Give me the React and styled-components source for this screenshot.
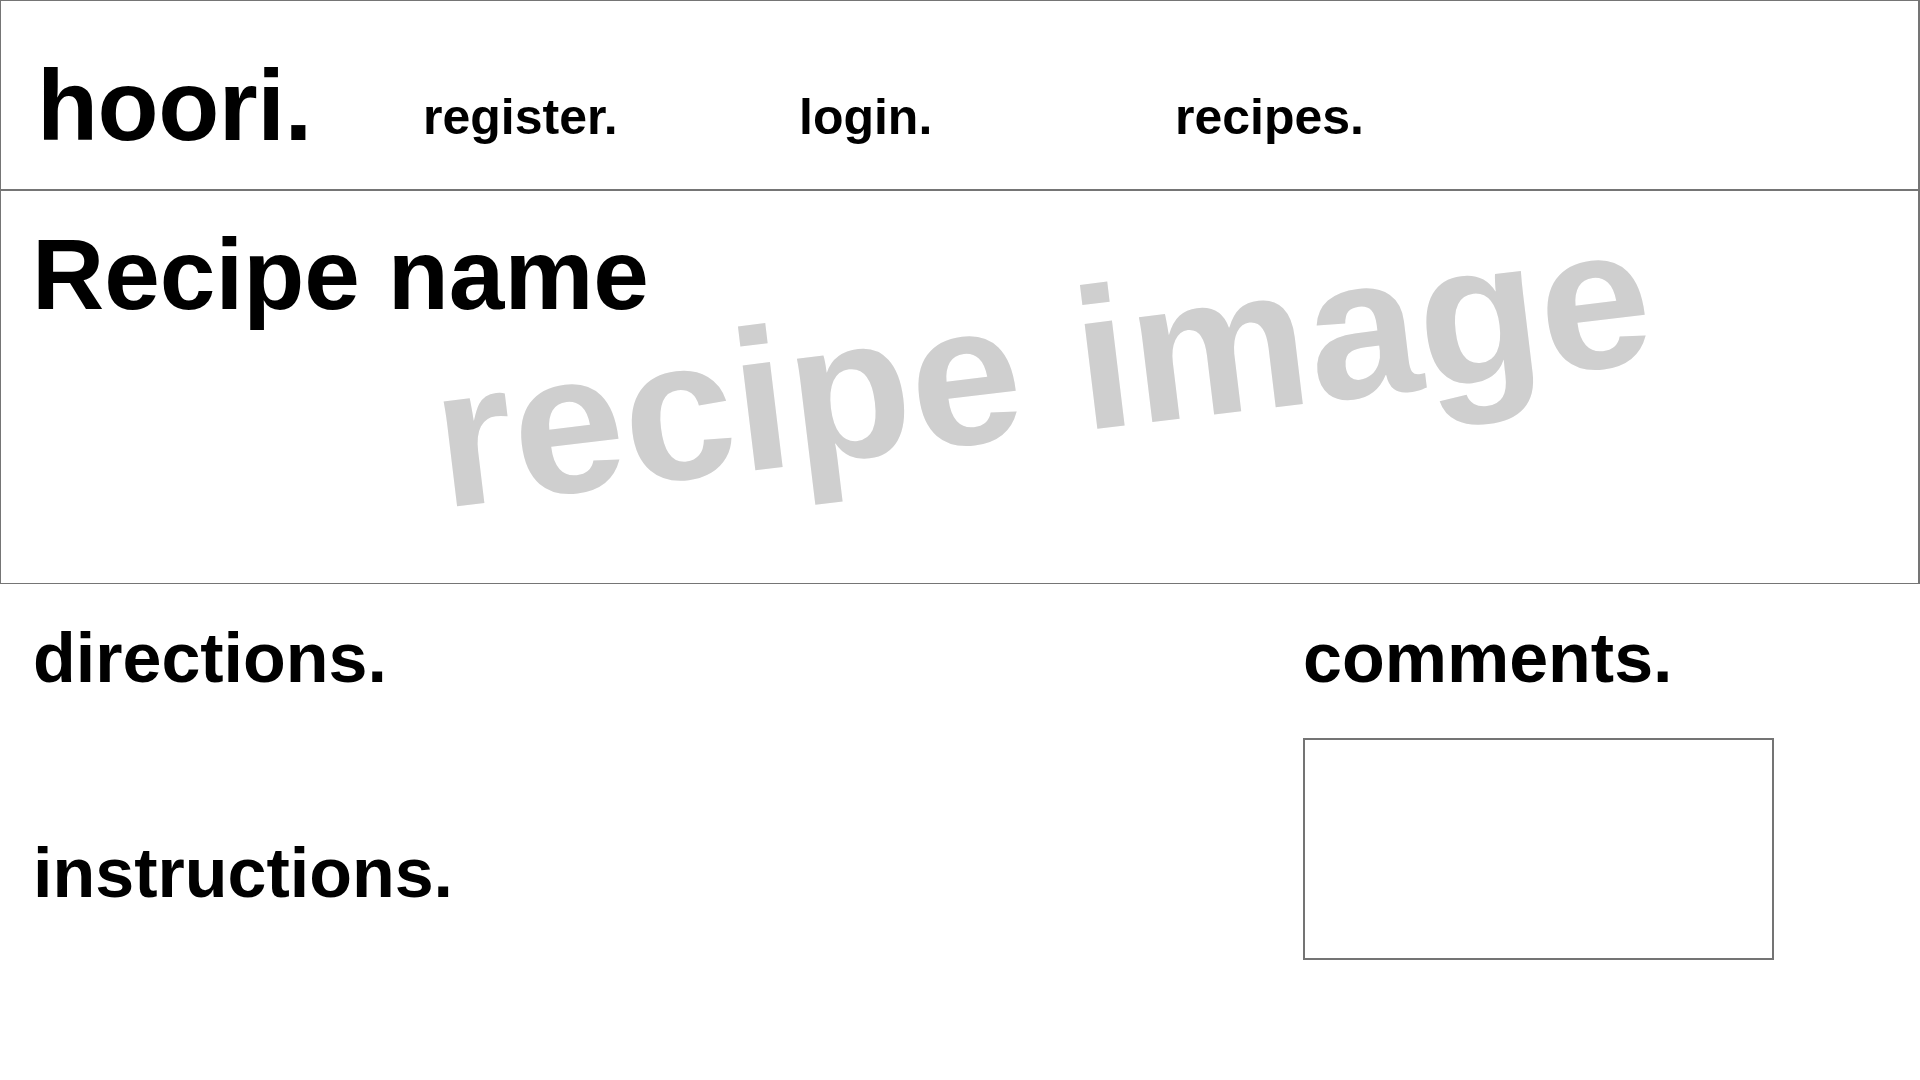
import React from "react";
import styled, { createGlobalStyle } from "styled-components";

const GlobalStyle = createGlobalStyle`
  html, body {
    margin: 0;
    padding: 0;
    background: #ffffff;
  }
  body {
    font-family: "Liberation Sans", Arial, Helvetica, sans-serif;
    color: #000;
  }
  * { box-sizing: border-box; }
`;

const Page = styled.div`
  width: 1920px;
  min-height: 1080px;
  background: #fff;
`;

const Header = styled.header`
  display: flex;
  align-items: flex-start;
  height: 191px;
  padding: 54px 0 0 36px;
  border: 1px solid #757575;
  border-right-width: 2px;
  border-bottom-width: 2px;
`;

const Logo = styled.div`
  flex: none;
  width: 386px;
  font-size: 100px;
  line-height: 100px;
  font-weight: 700;
  letter-spacing: -0.5px;
`;

const Nav = styled.nav`
  display: flex;
  margin-top: 36px;
`;

const NavLink = styled.a`
  flex: none;
  width: 376px;
  font-size: 50px;
  line-height: 52px;
  font-weight: 700;
  letter-spacing: 0;
  color: #000;
  text-decoration: none;
`;

const ImageSection = styled.section`
  position: relative;
  height: 393px;
  padding: 33px 0 0 31px;
  border: 1px solid #757575;
  border-top: none;
  border-right-width: 2px;
`;

const RecipeTitle = styled.h1`
  position: relative;
  z-index: 1;
  margin: 0;
  font-size: 100px;
  line-height: 100px;
  font-weight: 700;
  letter-spacing: 0;
`;

const Watermark = styled.div`
  position: absolute;
  left: 1041px;
  top: 175px;
  transform: translate(-50%, -50%) rotate(-6.9deg);
  white-space: nowrap;
  font-size: 200px;
  line-height: 200px;
  font-weight: 700;
  color: #cfcfcf;
  user-select: none;
`;

const Details = styled.section`
  display: grid;
  grid-template-columns: 1270px 471px;
  padding: 39px 0 0 33px;
`;

const Column = styled.div`
  display: flex;
  flex-direction: column;
`;

const SectionHeading = styled.h2`
  margin: 0 0 ${(p) => p.$gap || 0}px;
  font-size: 70px;
  line-height: 70px;
  font-weight: 700;
  letter-spacing: 0;
`;

const CommentBox = styled.div`
  width: 471px;
  height: 222px;
  border: 2px solid #747474;
  background: #fff;
`;

export default function App() {
  return (
    <Page>
      <GlobalStyle />
      <Header>
        <Logo>hoori.</Logo>
        <Nav>
          <NavLink href="#">register.</NavLink>
          <NavLink href="#">login.</NavLink>
          <NavLink href="#">recipes.</NavLink>
        </Nav>
      </Header>
      <ImageSection>
        <RecipeTitle>Recipe name</RecipeTitle>
        <Watermark aria-hidden="true">recipe image</Watermark>
      </ImageSection>
      <Details>
        <Column>
          <SectionHeading $gap={145}>directions.</SectionHeading>
          <SectionHeading>instructions.</SectionHeading>
        </Column>
        <Column>
          <SectionHeading $gap={45}>comments.</SectionHeading>
          <CommentBox />
        </Column>
      </Details>
    </Page>
  );
}
